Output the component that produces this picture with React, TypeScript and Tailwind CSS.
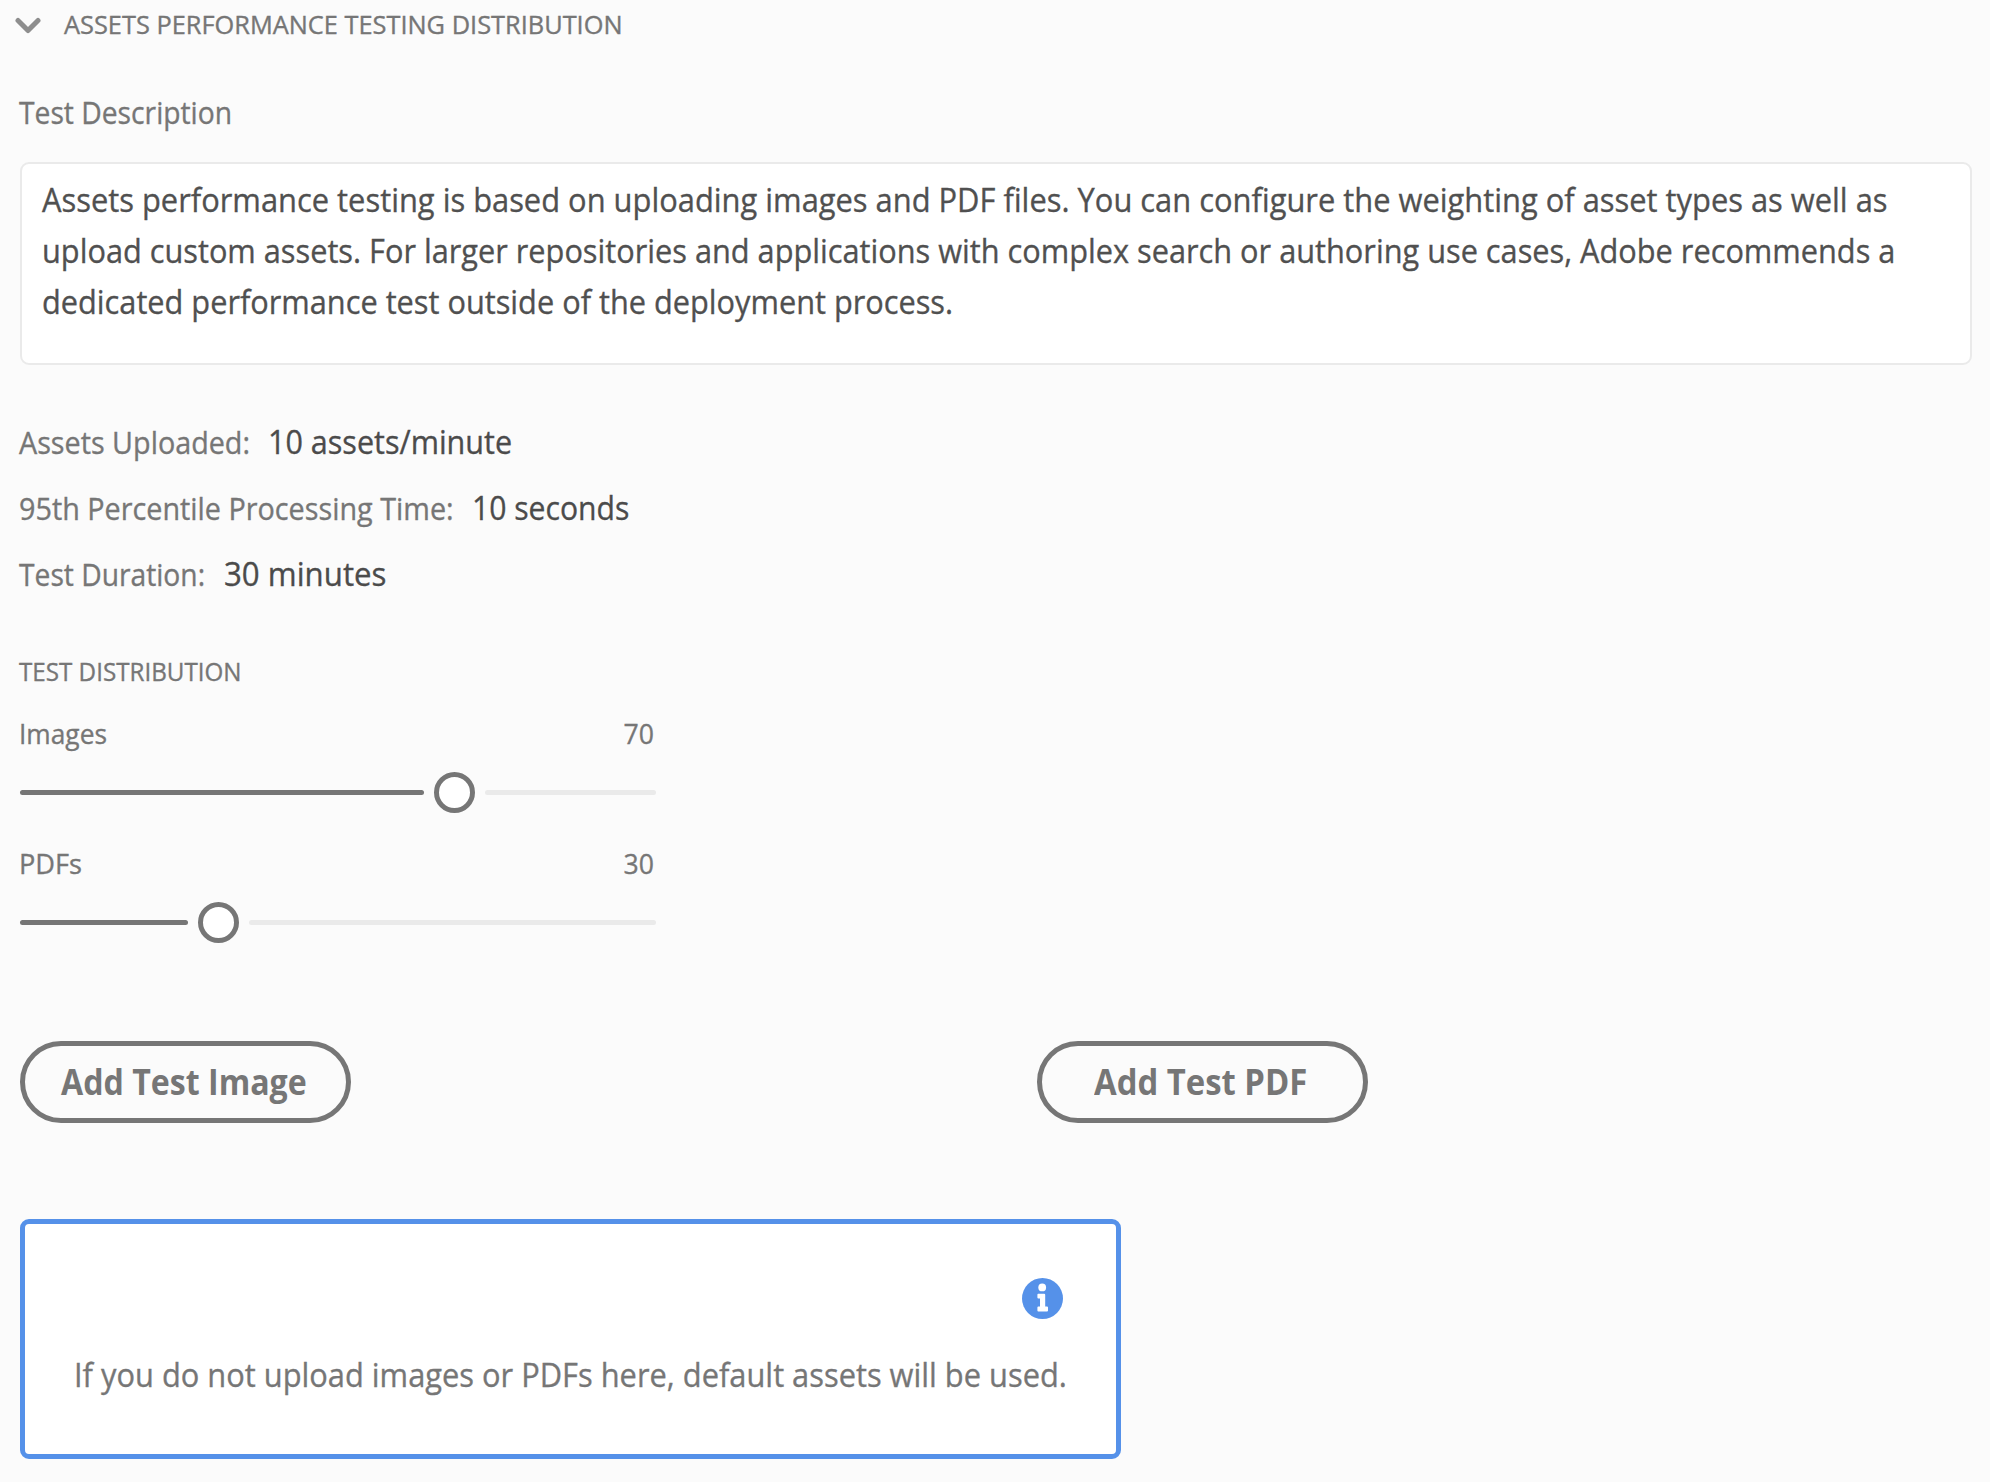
const DESCRIPTION = [
  {
    text: 'Assets performance testing is based on uploading images and PDF files. You can configure the weighting of asset types as well as',
    fit: 'scale-x-[0.919]',
  },
  {
    text: 'upload custom assets. For larger repositories and applications with complex search or authoring use cases, Adobe recommends a',
    fit: 'scale-x-[0.915]',
  },
  { text: 'dedicated performance test outside of the deployment process.', fit: 'scale-x-[0.915]' },
]

const METRICS = [
  { label: 'Assets Uploaded:', value: '10 assets/minute', column: 'w-[249px]', labelFit: 'scale-x-[0.927]', valueFit: 'scale-x-[0.909]' },
  { label: '95th Percentile Processing Time:', value: '10 seconds', column: 'w-[453px]', labelFit: 'scale-x-[0.928]', valueFit: 'scale-x-[0.897]' },
  { label: 'Test Duration:', value: '30 minutes', column: 'w-[205px]', labelFit: 'scale-x-[0.91]', valueFit: 'scale-x-[0.93]' },
]

function Narrow({ text, fit, origin = 'origin-left' }: { text: string; fit: string; origin?: string }) {
  return <span className={`inline-block whitespace-nowrap ${origin} ${fit}`}>{text}</span>
}

function Slider(props: { label: string; value: number; fit: string; filled: string; rest: string }) {
  return (
    <div className="w-[636px]">
      <div className="-ml-px flex h-10 justify-between pr-0.5 text-[28px] leading-10">
        <Narrow text={props.label} fit={props.fit} />
        <Narrow text={String(props.value)} fit="scale-x-[0.95]" origin="origin-right" />
      </div>
      <div className="mt-[18px] flex h-[42px] items-center justify-between">
        <div className={`h-[5px] rounded-full bg-[#767676] ${props.filled}`} />
        <div className="size-[41px] rounded-full border-[5px] border-[#767676] bg-white" />
        <div className={`h-[5px] rounded-full bg-[#eaeaea] ${props.rest}`} />
      </div>
    </div>
  )
}

function PillButton({ text, fit }: { text: string; fit: string }) {
  return (
    <button className="flex h-[82px] w-[331px] items-center justify-center rounded-full border-[5px] border-[#767676] pr-[3px] text-[35px] font-bold [-webkit-text-stroke:0]">
      <Narrow text={text} fit={fit} origin="origin-center" />
    </button>
  )
}

export default function App() {
  return (
    <main className="flex h-[1482px] w-full flex-col overflow-hidden bg-[#fbfbfb] pt-1.5 pl-5 font-['Open_Sans',sans-serif] text-[#767676] [-webkit-text-stroke:0.35px_currentColor]">
      <header className="flex h-9 items-center">
        <svg className="mt-[3px] -ml-[5px] h-[17px] w-[26px]" viewBox="0 0 26 17" fill="none" stroke="#8e8e8e" strokeWidth="5" strokeLinecap="round" strokeLinejoin="round">
          <path d="M3 3.5 13 13.5 23 3.5" />
        </svg>
        <h1 className="ml-[23px] text-[25.2px] leading-9">
          <Narrow text="ASSETS PERFORMANCE TESTING DISTRIBUTION" fit="scale-x-[1.007]" />
        </h1>
      </header>

      <p className="mt-[50px] -ml-px text-[31px] leading-10">
        <Narrow text="Test Description" fit="scale-x-[0.911]" />
      </p>
      <section className="mt-[30px] h-[203px] w-[1952px] rounded-[9px] border-2 border-[#eaeaea] bg-white pt-2.5 pl-5 text-[33.6px] leading-[50.8px] text-[#505050]">
        {DESCRIPTION.map((line) => (
          <p key={line.text} className="w-[1920px]">
            <Narrow text={line.text} fit={line.fit} />
          </p>
        ))}
      </section>

      <dl className="mt-[43px] -ml-px text-[31px] leading-[66px]">
        {METRICS.map((m) => (
          <div key={m.label} className="flex h-[66px] items-baseline">
            <dt className={m.column}>
              <Narrow text={m.label} fit={m.labelFit} />
            </dt>
            <dd className="text-[33.6px] text-[#4b4b4b]">
              <Narrow text={m.value} fit={m.valueFit} />
            </dd>
          </div>
        ))}
      </dl>

      <h2 className="mt-[47px] -ml-px text-[25.2px] leading-9">
        <Narrow text="TEST DISTRIBUTION" fit="scale-x-[0.96]" />
      </h2>
      <div className="mt-6 flex flex-col gap-[30px]">
        <Slider label="Images" value={70} fit="scale-x-[0.94]" filled="w-[404px]" rest="w-[171px]" />
        <Slider label="PDFs" value={30} fit="scale-x-[0.97]" filled="w-[168px]" rest="w-[407px]" />
      </div>

      <div className="mt-[98px] flex gap-[686px]">
        <PillButton text="Add Test Image" fit="scale-x-[0.918]" />
        <PillButton text="Add Test PDF" fit="scale-x-[0.938]" />
      </div>

      <section className="mt-24 flex h-[240px] w-[1101px] flex-col rounded-[9px] border-[5px] border-[#5591e9] bg-white pt-[54px] pr-[51px] pl-[49px]">
        <svg className="mr-0.5 size-[41px] self-end" viewBox="0 0 41 41">
          <circle cx="20.5" cy="20.5" r="20.5" fill="#5591e9" />
          <circle cx="20.2" cy="9.4" r="3.9" fill="#fff" />
          <path
            d="M16.2 15.8H22.2Q23.2 15.8 23.2 16.8V28.4H25Q26 28.4 26 29.4V32.4Q26 33.4 25 33.4H16.4Q15.4 33.4 15.4 32.4V29.4Q15.4 28.4 16.4 28.4H18V20.6H16.4Q15.4 20.6 15.4 19.6V16.8Q15.4 15.8 16.2 15.8Z"
            fill="#fff"
          />
        </svg>
        <p className="mt-[30px] text-[33.6px] leading-[50px]">
          <Narrow text="If you do not upload images or PDFs here, default assets will be used." fit="scale-x-[0.918]" />
        </p>
      </section>
    </main>
  )
}
